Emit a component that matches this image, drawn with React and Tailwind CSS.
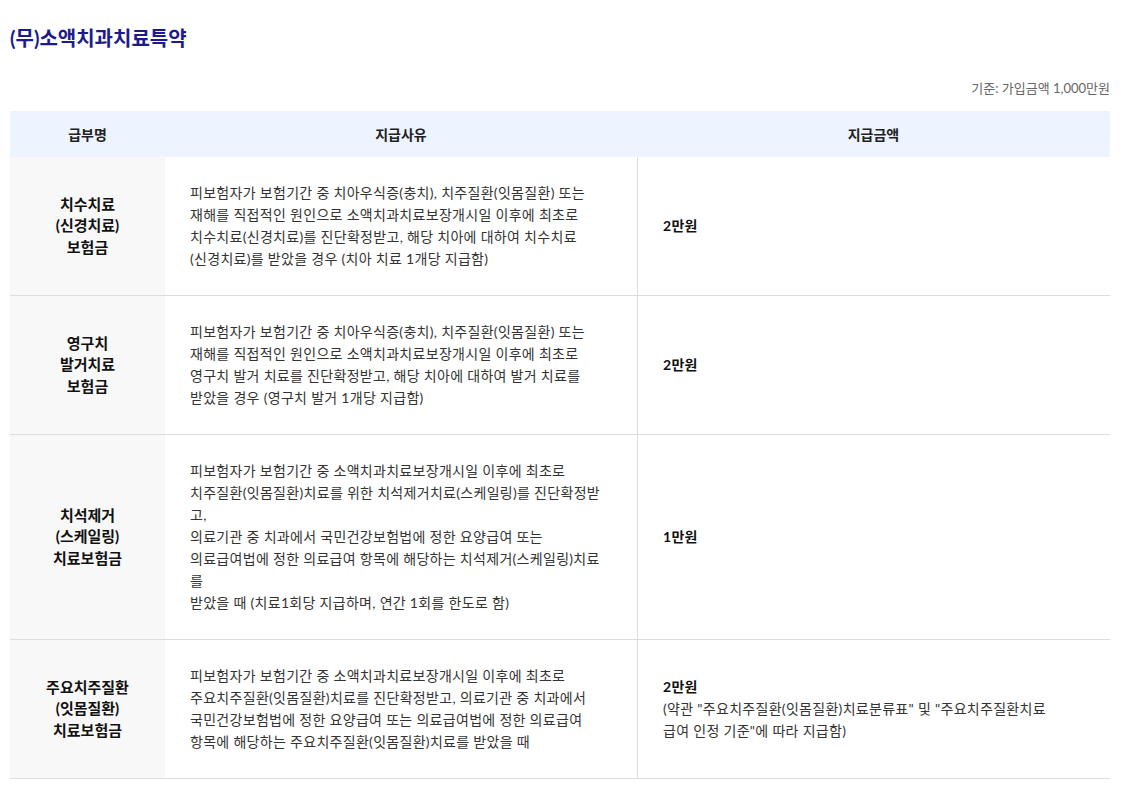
import React from 'react';

const rows = [
  {
    name: ['치수치료', '(신경치료)', '보험금'],
    reason: [
      '피보험자가 보험기간 중 치아우식증(충치), 치주질환(잇몸질환) 또는',
      '재해를 직접적인 원인으로 소액치과치료보장개시일 이후에 최초로',
      '치수치료(신경치료)를 진단확정받고, 해당 치아에 대하여 치수치료',
      '(신경치료)를 받았을 경우 (치아 치료 1개당 지급함)',
    ],
    amount: '2만원',
  },
  {
    name: ['영구치', '발거치료', '보험금'],
    reason: [
      '피보험자가 보험기간 중 치아우식증(충치), 치주질환(잇몸질환) 또는',
      '재해를 직접적인 원인으로 소액치과치료보장개시일 이후에 최초로',
      '영구치 발거 치료를 진단확정받고, 해당 치아에 대하여 발거 치료를',
      '받았을 경우 (영구치 발거 1개당 지급함)',
    ],
    amount: '2만원',
  },
  {
    name: ['치석제거', '(스케일링)', '치료보험금'],
    reason: [
      '피보험자가 보험기간 중 소액치과치료보장개시일 이후에 최초로',
      '치주질환(잇몸질환)치료를 위한 치석제거치료(스케일링)를 진단확정받',
      '고,',
      '의료기관 중 치과에서 국민건강보험법에 정한 요양급여 또는',
      '의료급여법에 정한 의료급여 항목에 해당하는 치석제거(스케일링)치료',
      '를',
      '받았을 때 (치료1회당 지급하며, 연간 1회를 한도로 함)',
    ],
    amount: '1만원',
  },
  {
    name: ['주요치주질환', '(잇몸질환)', '치료보험금'],
    reason: [
      '피보험자가 보험기간 중 소액치과치료보장개시일 이후에 최초로',
      '주요치주질환(잇몸질환)치료를 진단확정받고, 의료기관 중 치과에서',
      '국민건강보험법에 정한 요양급여 또는 의료급여법에 정한 의료급여',
      '항목에 해당하는 주요치주질환(잇몸질환)치료를 받았을 때',
    ],
    amount: '2만원',
    note: [
      '(약관 "주요치주질환(잇몸질환)치료분류표" 및 "주요치주질환치료',
      '급여 인정 기준"에 따라 지급함)',
    ],
  },
];

export default function App() {
  return (
    <div
      className="bg-white w-[1132px] min-h-[790px] pl-[10px] pr-[22px] pt-[23px] text-[#333]"
      style={{ fontFamily: 'Lato, "Noto Sans CJK KR", sans-serif' }}
    >
      <h2 className="text-[20px] leading-[30px] font-bold text-[#1d1b8c]">(무)소액치과치료특약</h2>

      <p className="mt-[26px] text-right text-[13px] leading-[18px] text-[#666]">기준: 가입금액 1,000만원</p>

      <div className="mt-[14px] grid grid-cols-[155px_472px_1fr]">
        {/* Header */}
        <div className="bg-[#edf4ff] h-[46px] flex items-center justify-center text-[14px] font-bold text-[#222]">급부명</div>
        <div className="bg-[#edf4ff] h-[46px] flex items-center justify-center text-[14px] font-bold text-[#222]">지급사유</div>
        <div className="bg-[#edf4ff] h-[46px] flex items-center justify-center text-[14px] font-bold text-[#222]">지급금액</div>

        {rows.map((row, i) => (
          <React.Fragment key={i}>
            <div className="bg-[#f8f8f8] border-b border-[#dddddd] flex flex-col items-center justify-center text-center text-[15px] leading-[21.5px] font-bold text-[#111]">
              {row.name.map((n, j) => (
                <span key={j}>{n}</span>
              ))}
            </div>
            <div className="border-b border-[#dddddd] py-[25px] pl-[25px] pr-[10px] text-[14px] leading-[22px] tracking-[0.3px] whitespace-nowrap">
              {row.reason.map((r, j) => (
                <div key={j}>{r}</div>
              ))}
            </div>
            <div className="border-b border-l border-[#dddddd] flex flex-col justify-center pl-[25px] text-[14px] leading-[22px] tracking-[0.3px]">
              <div className="font-bold text-[#111]">{row.amount}</div>
              {row.note &&
                row.note.map((n, j) => (
                  <div key={j}>{n}</div>
                ))}
            </div>
          </React.Fragment>
        ))}
      </div>
    </div>
  );
}
